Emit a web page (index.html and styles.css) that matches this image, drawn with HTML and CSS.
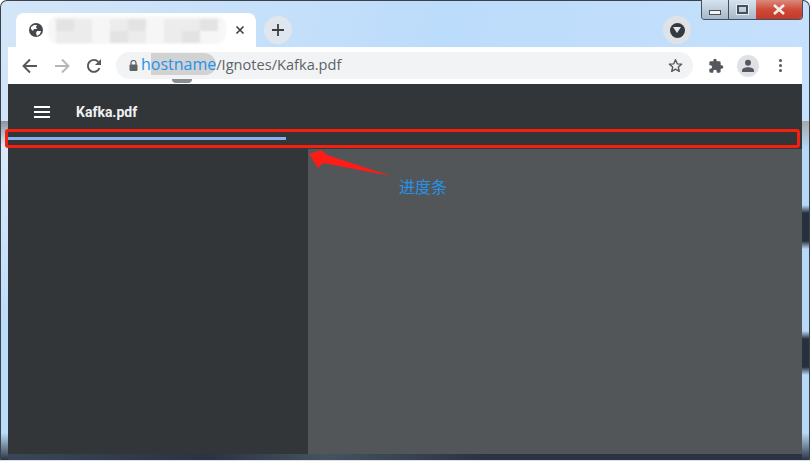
FILE: index.html
```html
<!DOCTYPE html>
<html lang="zh">
<head>
<meta charset="utf-8">
<title>Kafka.pdf</title>
<link rel="stylesheet" href="styles.css">
</head>
<body>
<div class="window">
  <div class="frame-edge-left"></div>
  <div class="frame-edge-right"></div>
  <div class="caption-buttons">
    <div class="cap cap-min"><span class="min-glyph"></span></div>
    <div class="cap cap-max"><span class="max-glyph"></span></div>
    <div class="cap cap-close"><svg width="14" height="11" viewBox="0 0 14 11"><path d="M2 1 L12 10 M12 1 L2 10" stroke="#f4ecec" stroke-width="2.6" fill="none"/></svg></div>
  </div>
  <div class="tabstrip">
    <div class="tab">
      <svg class="globe" width="14" height="14" viewBox="0 0 14 14"><circle cx="7" cy="7" r="7" fill="#45484c"/><path d="M2 4 L5 2 L8 2 L7 4 L8 6 L5 6 L4 8 L2 6 Z M8 8 L12 8 L11 11 L8 13 L7 10 Z" fill="#fff"/></svg>
      <div class="blur-title"><i></i><i></i><i></i><i></i><i></i><i></i><i></i><i></i><i></i><i></i><i></i><i></i><i></i><i></i><i></i><i></i><i></i><i></i></div>
      <svg class="tab-close" width="10" height="10" viewBox="0 0 10 10"><path d="M1.5 1.5 L8.500 8.500 M8.500 1.500 L1.500 8.500" stroke="#3c3f43" stroke-width="1.600"/></svg>
    </div>
    <div class="newtab"><svg width="12" height="12" viewBox="0 0 12 12"><path d="M6 0 V12 M0 6 H12" stroke="#3c4043" stroke-width="1.800"/></svg></div>
    <div class="tab-search"><span class="tab-search-dot"><svg width="8" height="6" viewBox="0 0 8 6"><path d="M0 0 H8 L4 6 Z" fill="#e8e8ea"/></svg></span></div>
  </div>
  <div class="toolbar">
    <svg class="nav nav-back" width="16" height="16" viewBox="0 0 16 16"><path d="M15 8 H2 M8 1.500 L1.500 8 L8 14.500" stroke="#54575b" stroke-width="1.900" fill="none"/></svg>
    <svg class="nav nav-fwd" width="16" height="16" viewBox="0 0 16 16"><path d="M1 8 H14 M8 1.500 L14.500 8 L8 14.500" stroke="#b3b6ba" stroke-width="1.900" fill="none"/></svg>
    <svg class="nav nav-reload" width="16" height="16" viewBox="0 0 16 16"><path d="M13.500 10 A6 6 0 1 1 12.300 3.800" stroke="#54575b" stroke-width="1.900" fill="none"/><path d="M15 1 V7 H9 Z" fill="#54575b"/></svg>
    <div class="omnibox">
      <svg class="lock" width="9" height="11" viewBox="0 0 9 11"><path d="M2 5 V3 A2.500 2.500 0 0 1 7 3 V5" stroke="#5f6368" stroke-width="1.200" fill="none"/><rect x="0.500" y="4.500" width="8" height="6.500" rx="1" fill="#5f6368"/></svg>
      <span class="url"><span class="host">hostname</span>/Ignotes/Kafka.pdf</span>
      <svg class="star" width="15" height="15" viewBox="0 0 24 24"><path d="M12 2.800 L14.800 9.300 L21.800 9.900 L16.500 14.500 L18.100 21.400 L12 17.800 L5.900 21.400 L7.500 14.500 L2.200 9.900 L9.200 9.300 Z" fill="none" stroke="#54575b" stroke-width="2.200" stroke-linejoin="round"/></svg>
      <span class="smudge"></span>
    </div>
    <svg class="ext" width="16" height="16" viewBox="0 0 24 24"><path d="M20.500 11H19V7a2 2 0 0 0-2-2h-4V3.500a2.500 2.500 0 0 0-5 0V5H4a2 2 0 0 0-2 2v3.800h1.500a2.700 2.700 0 0 1 0 5.400H2V20a2 2 0 0 0 2 2h3.800v-1.500a2.700 2.700 0 0 1 5.400 0V22H17a2 2 0 0 0 2-2v-4h1.500a2.500 2.500 0 0 0 0-5z" fill="#54575b"/></svg>
    <div class="avatar"><svg width="14" height="14" viewBox="0 0 14 14"><circle cx="7" cy="3.800" r="3" fill="#54575f"/><path d="M1 13 V11.500 C1 9.300 4 8.300 7 8.300 C10 8.300 13 9.300 13 11.500 V13 Z" fill="#54575f"/></svg></div>
    <div class="kebab"><i></i><i></i><i></i></div>
  </div>
  <div class="viewer">
    <div class="appbar">
      <div class="burger"><i></i><i></i><i></i></div>
      <div class="doc-title">Kafka.pdf</div>
    </div>
    <div class="progress-track"><div class="progress-fill"></div></div>
    <div class="panes">
      <div class="sidebar"></div>
      <div class="main-pane"></div>
    </div>
  </div>
  <div class="bottom-strip"></div>

  <div class="highlight-box"></div>
  <svg class="arrow" width="84" height="30" viewBox="0 0 84 30"><path d="M1 5 L13 1 L19 6 L83 27 L15 14 L10 19 Z" fill="#ff1c16"/></svg>
  <div class="annotation">进度条</div>
</div>
</body>
</html>
```
FILE: styles.css
```css
* { box-sizing: border-box; }
html, body { margin: 0; padding: 0; width: 810px; height: 461px; overflow: hidden; background: #fff; }
body { font-family: "Liberation Sans", Arial, sans-serif; }

.window {
  position: relative;
  width: 810px;
  height: 461px;
  padding: 12px 7px 0;
  display: flex;
  flex-direction: column;
  border: 1px solid #39414b;
  border-bottom-color: #d9e2ea;
  border-radius: 7px 7px 2px 2px;
  background: linear-gradient(100deg, #d3e6f8 0%, #bcdcfb 50%, #c6e1fc 100%);
}
.frame-edge-left, .frame-edge-right {
  position: absolute;
  top: 120px;
  bottom: 0;
  width: 7px;
}
.frame-edge-left { left: 0; background: linear-gradient(180deg, #8d949c 0, #dbeafa 25px, #bcdcfb 60%, #bcdcfb 92%, #2b3442 100%); }
.frame-edge-right { right: 0; background: linear-gradient(180deg, #a7a7a7 0, #b8d8f8 28px, #b8d8f8 84px, #27303d 92px, #27303d 120px, #b8d8f8 128px, #b8d8f8 210px, #27303d 218px, #27303d 246px, #b8d8f8 254px, #b8d8f8 92%, #2b3442 100%); }

.caption-buttons {
  position: absolute;
  top: -1px;
  right: 6px;
  width: 102px;
  height: 20px;
  display: flex;
  border: 1px solid #46505c;
  border-top: 0;
  border-radius: 0 0 4px 4px;
  overflow: hidden;
}
.cap { display: flex; align-items: center; justify-content: center; height: 100%; }
.cap-min { width: 27px; background: linear-gradient(#d6e3f0, #a8b8c8); border-right: 1px solid #46505c; }
.cap-max { width: 27px; background: linear-gradient(#d6e3f0, #a8b8c8); }
.cap-close { flex: 1; background: linear-gradient(#d98a7c 0, #cf4a38 50%, #c23a2a 100%); }
.min-glyph { display: block; width: 12px; height: 5px; margin-top: 5px; background: #f3f6f9; border: 1px solid #47505a; }
.max-glyph { display: block; width: 11px; height: 9px; background: transparent; border: 2px solid #47505a; outline: 1px solid #e6edf4; }

.tabstrip { height: 34px; display: flex; align-items: flex-start; flex: none; }
.tab {
  width: 240px;
  height: 34px;
  margin-left: 8px;
  display: flex;
  align-items: center;
  padding: 0 11px 0 13px;
  background: #fff;
  border-radius: 8px 8px 0 0;
}
.globe { flex: none; }
.blur-title {
  flex: 1;
  height: 28px;
  margin: 0 9px 0 5px;
  padding: 3px 8px 1px;
  display: grid;
  grid-template-columns: repeat(9, 1fr);
  grid-template-rows: 1fr 1fr;
  background: #f7f7f7;
  border-radius: 10px;
  filter: blur(1.200px);
}
.blur-title i { background: #ececec; }
.blur-title i:nth-child(3n) { background: #f6f6f6; }
.blur-title i:nth-child(4n+1) { background: #e3e3e3; }
.tab-close { flex: none; }
.newtab {
  width: 28px;
  height: 28px;
  margin: 3px 0 0 8px;
  border-radius: 50%;
  background: #dfe6ee;
  display: flex;
  align-items: center;
  justify-content: center;
}
.tab-search {
  width: 28px;
  height: 28px;
  margin: 3px 0 0 371px;
  border-radius: 50%;
  background: #dfe3e8;
  display: flex;
  align-items: center;
  justify-content: center;
}
.tab-search-dot { width: 15px; height: 15px; border-radius: 50%; background: #343a40; display: flex; align-items: center; justify-content: center; }

.toolbar {
  height: 37px;
  flex: none;
  background: #fff;
  display: flex;
  align-items: center;
}
.nav { flex: none; }
.nav-back { margin-left: 14px; }
.nav-fwd { margin-left: 16px; }
.nav-reload { margin-left: 16px; }
.omnibox {
  position: relative;
  width: 577px;
  height: 27px;
  margin-left: 14px;
  padding: 0 10px 3px 13px;
  border-radius: 14px;
  background: #f1f3f4;
  display: flex;
  align-items: center;
}
.lock { flex: none; margin-top: 3px; }
.url { font-family: "Open Sans", sans-serif; font-size: 14.600px; color: #5f6368; margin-left: 3px; flex: 1; white-space: nowrap; }
.host { font-size: 16px; color: #2592ea; background: linear-gradient(90deg, transparent 10px, #d2d2d2 10px); border-radius: 0 12px 10px 0; }
.star { flex: none; margin-top: 3px; }
.smudge { position: absolute; left: 56px; bottom: -4px; width: 20px; height: 4px; background: #8a8c8f; border-radius: 0 0 8px 8px; }
.ext { flex: none; margin-left: 15px; }
.avatar { width: 22px; height: 22px; margin-left: 13px; border-radius: 50%; background: #dfe1e5; display: flex; align-items: center; justify-content: center; flex: none; }
.kebab { margin-left: 20px; display: flex; flex-direction: column; gap: 2px; flex: none; }
.kebab i { display: block; width: 3px; height: 3px; border-radius: 50%; background: #54575b; }

.viewer { flex: none; height: 370px; display: flex; flex-direction: column; background: #323639; }
.appbar { height: 48px; flex: none; display: flex; align-items: center; padding: 8px 0 0 26px; }
.burger { display: flex; flex-direction: column; gap: 3px; width: 16px; }
.burger i { display: block; height: 2px; background: #fff; }
.doc-title { margin-left: 26px; font-family: "Roboto", sans-serif; font-size: 14px; font-weight: 700; color: #f1f1f1; }
.progress-track { height: 17px; flex: none; padding-top: 5px; background: #323639; }
.progress-fill { width: 278px; height: 3px; background: #86b0ee; }
.panes { flex: 1; display: flex; }
.sidebar { width: 300px; flex: none; background: #323639; }
.main-pane { flex: 1; background: #525659; }
.bottom-strip { flex: 1; background: linear-gradient(90deg, #3a4656, #2a3342 25%, #46525f 40%, #2a3342 60%, #2a3342 100%); }

.highlight-box {
  position: absolute;
  left: 4px;
  top: 128px;
  width: 795px;
  height: 19px;
  border: 3px solid #f5200f;
  border-radius: 3px;
}
.arrow { position: absolute; left: 307px; top: 148px; }
.annotation {
  position: absolute;
  left: 398px;
  top: 175px;
  font-family: "Noto Sans CJK SC", sans-serif;
  font-size: 16px;
  line-height: 20px;
  color: #2592ea;
}
```
